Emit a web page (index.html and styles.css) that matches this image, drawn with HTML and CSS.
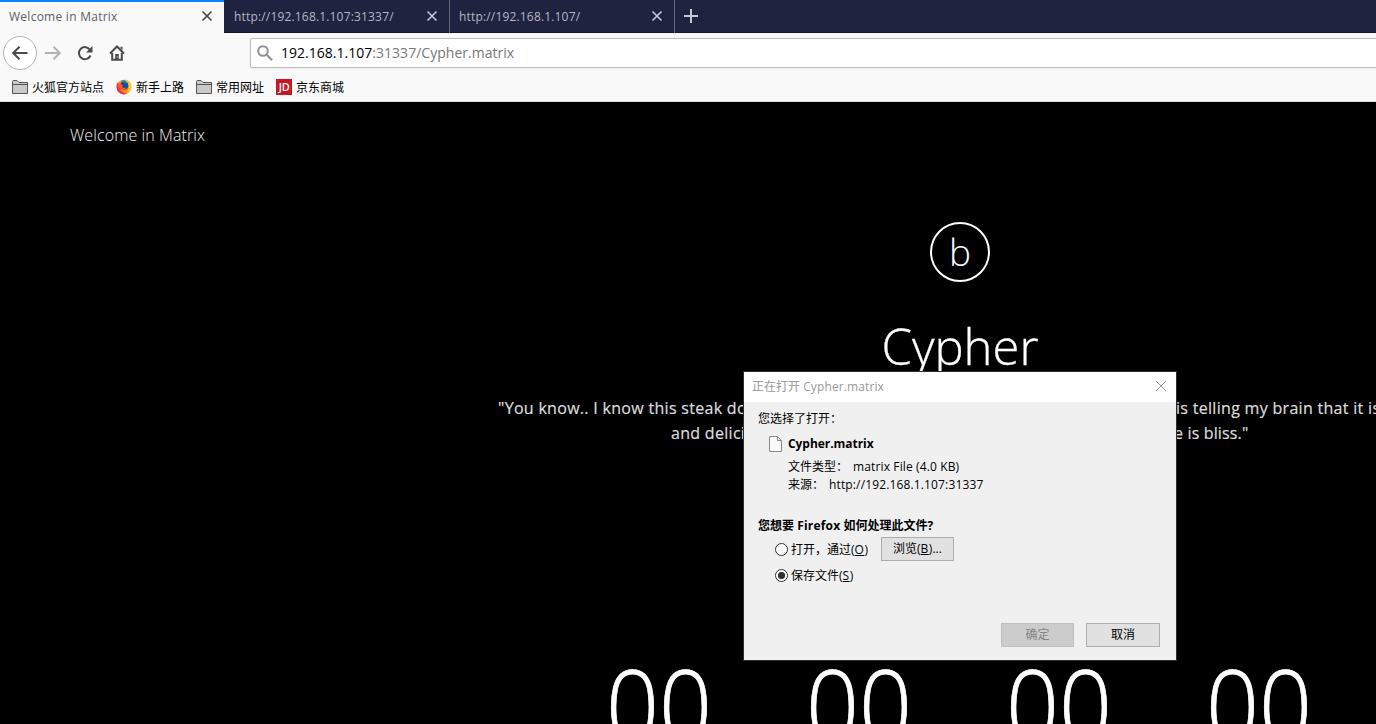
FILE: index.html
```html
<!DOCTYPE html>
<html lang="zh-CN">
<head>
<meta charset="utf-8">
<title>Welcome in Matrix</title>
<link rel="stylesheet" href="styles.css">
</head>
<body>
<div class="browser">
  <div class="tabs">
    <div class="tab active"><span class="label t1">Welcome in Matrix</span><svg class="close" viewBox="0 0 12 12"><path d="M1.5 1.5l9 9M10.5 1.5l-9 9"/></svg></div>
    <div class="tab second"><span class="label t2">http://192.168.1.107:31337/</span><svg class="close" viewBox="0 0 12 12"><path d="M1.5 1.5l9 9M10.5 1.5l-9 9"/></svg></div>
    <div class="tab third"><span class="label t3">http://192.168.1.107/</span><svg class="close" viewBox="0 0 12 12"><path d="M1.5 1.5l9 9M10.5 1.5l-9 9"/></svg></div>
    <svg class="plus" viewBox="0 0 14 14"><path d="M7 0v14M0 7h14"/></svg>
  </div>
  <div class="toolbar">
    <div class="back"><svg class="icon" viewBox="0 0 16 16"><path d="M15.500 8H1.5M7.5 1.7L1.2 8l6.3 6.3"/></svg></div>
    <svg class="icon forward" viewBox="0 0 16 16"><path d="M0 8h14.5M8.5 1.7L14.800 8l-6.300 6.300"/></svg>
    <svg class="icon reload" viewBox="0 0 16 16"><path d="M13.500 10.500A6 6 0 1 1 13 4.800"/><path class="fill" d="M15.500 1v6.500H9z"/></svg>
    <svg class="icon home" viewBox="0 0 16 16"><path d="M1 8.500L8 1.500l7 7M3.200 8v6.800h9.600V8"/><path class="fill" d="M6.200 9h3.600v6H6.200zM11.500 1.800h2v3.500l-2-2z"/><path class="knob" d="M8.300 11.500v1"/></svg>
    <div class="address"><svg class="search" viewBox="0 0 16 16"><circle cx="6" cy="6" r="4.800"/><path d="M9.700 9.700l5.500 5.500"/></svg><span class="url"><b>192.168.1.107</b>:31337/Cypher.matrix</span></div>
  </div>
  <div class="bookmarks">
    <div class="mark"><svg class="folder" viewBox="0 0 16 14"><path d="M.5 13.500V1.500q0-1 1-1h3.500l2 2h8.500v11zM.5 4.500H15.500"/></svg><span>火狐官方站点</span></div>
    <div class="mark"><svg class="fox" viewBox="0 0 16 16"><circle cx="8" cy="8" r="7.300" fill="#ff8a16"/><path d="M9 .6c4 .4 7 4 6.400 8-.5 4-3.700 6.300-7 6.400 3-1 5-4 4-8z" fill="#ffc928"/><path d="M1 4c-1 4-.5 8 3 10.300 2 1.300 5 1.500 7 .2C6 14 3 11 4 7z" fill="#f5284e"/><circle cx="8.300" cy="6.600" r="4" fill="#174f9b"/><path d="M5 2c3-2 6 0 6.500 3L9 4z" fill="#1886d9"/><path d="M1.500 3l2.500 2L7 6.200 6 7.500l1.500 1.500 2.500-.5c-1 2.500-4 3-6 1.500C2.500 9 1.500 6 1.500 3z" fill="#ff5a2a"/></svg><span>新手上路</span></div>
    <div class="mark"><svg class="folder" viewBox="0 0 16 14"><path d="M.5 13.500V1.500q0-1 1-1h3.500l2 2h8.500v11zM.5 4.500H15.500"/></svg><span>常用网址</span></div>
    <div class="mark"><i class="jd">JD</i><span>京东商城</span></div>
  </div>
  <div class="page">
    <div class="brand">Welcome in Matrix</div>
    <div class="hero">
      <div class="circle">b</div>
      <h1><span>Cypher</span></h1>
      <div class="quote">
        <p><span>"You know.. I know this steak do</span><span>is telling my brain that it is</span></p>
        <p class="second-line"><span>and delici</span><span>e is bliss."</span></p>
      </div>
      <div class="countdown"><span>00</span><span>00</span><span>00</span><span>00</span></div>
    </div>
  </div>
</div>
<div class="dialog">
  <div class="titlebar"><span>正在打开 <em>Cypher.matrix</em></span><svg viewBox="0 0 12 12"><path d="M1 1l10 10M11 1L1 11"/></svg></div>
  <div class="content">
    <p class="chosen">您选择了打开：</p>
    <div class="file"><svg viewBox="0 0 13 16"><path d="M.5.5h8l4 4v11H.5zM8.500.5v4h4"/></svg><b>Cypher.matrix</b></div>
    <dl><dt>文件类型：</dt><dd class="kind">matrix File (4.0 KB)</dd></dl>
    <dl><dt>来源：</dt><dd class="source">http://192.168.1.107:31337</dd></dl>
    <p class="question">您想要 <em>Firefox</em> 如何处理此文件?</p>
    <div class="option open"><i class="radio"></i><span>打开，通过(<u>O</u>)</span><div class="button browse">浏览(<u>B</u>)...</div></div>
    <div class="option save"><i class="radio on"></i><span>保存文件(<u>S</u>)</span></div>
    <div class="actions"><div class="button disabled">确定</div><div class="button cancel">取消</div></div>
  </div>
</div>
</body>
</html>
```
FILE: styles.css
```css
* { box-sizing: border-box; }
body { margin: 0; width: 1376px; height: 724px; overflow: hidden; position: relative; background: #000; font: 12px "Open Sans", "Noto Sans CJK SC", sans-serif; }
p, h1, dl, dd { margin: 0; }
i, em { font-style: normal; }
svg { flex: none; fill: none; stroke: currentColor; }
.browser { width: 1376px; height: 724px; overflow: hidden; display: flex; flex-direction: column; }

.tabs { flex: none; height: 33px; display: flex; align-items: center; background: #202340; border-bottom: 1px solid #14162b; color: #b4b5c3; }
.tab { width: 225px; height: 33px; flex: none; display: flex; align-items: center; justify-content: space-between; padding: 0 11px 0 10px; border-right: 1px solid #65677b; }
.tab.second { width: 226px; }
.tab.third { padding-left: 9px; }
.tab.active { width: 224px; background: #f9f9fa; border-top: 2px solid #0a84ff; border-right: 0; color: #606064; padding: 0 11px 2px 9px; }
.label { white-space: nowrap; line-height: 18px; padding-top: 2px; }
.t1 { letter-spacing: .26px; }
.t2, .t3 { letter-spacing: .17px; }
.close { width: 12px; height: 12px; stroke-width: 1.6; color: #c8c8d2; }
.active .close { color: #454548; }
.plus { width: 14px; height: 14px; margin-left: 9px; stroke-width: 2; color: #c8c8d2; }

.toolbar { flex: none; height: 40px; display: flex; align-items: center; padding-left: 3px; background: #f9f9fa; color: #4a4a4d; }
.icon { width: 16px; height: 16px; stroke-width: 2; }
.fill { fill: currentColor; stroke: none; }
.knob { stroke: #f9f9fa; stroke-width: 1; }
.back { flex: none; width: 34px; height: 34px; border: 1px solid #b4b4b5; border-radius: 50%; background: #fff; display: flex; align-items: center; justify-content: center; }
.forward { margin-left: 8px; color: #b3b3b4; }
.reload, .home { margin-left: 16px; }
.address { width: 1140px; height: 30px; margin-left: 125px; flex: none; display: flex; align-items: center; padding-left: 6px; border: 1px solid #bdbdbe; border-radius: 2px; background: #fff; box-shadow: 0 1px 3px rgba(0,0,0,.06); }
.search { width: 16px; height: 16px; color: #939394; stroke-width: 2.1; }
.url { margin-left: 8px; padding-bottom: 1px; font-size: 14px; line-height: 19px; letter-spacing: .02px; color: #777; white-space: nowrap; }
.url b { font-weight: 400; color: #000; }

.bookmarks { flex: none; height: 29px; display: flex; background: #f9f9fa; border-bottom: 1px solid #ddd; padding: 1px 0 0 12px; }
.mark { display: flex; align-items: center; height: 26px; line-height: 18px; white-space: nowrap; }
.mark span { margin-left: 4px; padding-top: 1px; }
.mark + .mark { margin-left: 12px; }
.folder { width: 16px; height: 14px; fill: #c9c9ca; color: #555; }
.fox { width: 16px; height: 16px; stroke: none; }
.jd { width: 16px; height: 16px; background: #c91623; color: #fff; font-size: 11px; font-weight: 600; line-height: 16px; text-align: center; letter-spacing: -.5px; }

.page { flex: 1; background: #000; color: #fff; width: 1920px; height: 622px; font-weight: 300; overflow: hidden; }
.brand { height: 120px; padding: 20px 0 0 70px; font-size: 16px; line-height: 26px; letter-spacing: .1px; color: #f0f0f0; }
.hero { display: flex; flex-direction: column; align-items: center; }
.circle { width: 60px; height: 60px; border: 2px solid #fff; border-radius: 50%; font-size: 37px; line-height: 56px; text-align: center; }
h1 { margin-top: 30px; font-size: 49px; font-weight: 300; line-height: 69px; }
h1 span { display: inline-block; -webkit-text-stroke: .3px #fff; }
.quote { width: 924px; margin-top: 15px; font-size: 16px; font-weight: 400; line-height: 25px; letter-spacing: .3px; color: #ddd; white-space: nowrap; -webkit-text-stroke: .2px #ddd; }
.quote p { display: grid; grid-template-columns: 246px 246px; column-gap: 432px; }
.quote .second-line { padding-left: 173px; grid-template-columns: 73px 73px; column-gap: 430px; }
.quote .second-line span + span { letter-spacing: .15px; }
.countdown { margin-top: 188px; display: grid; grid-template-columns: repeat(4, 200px); margin-right: 2px; font-size: 101px; line-height: 140px; text-align: center; -webkit-text-stroke: .8px #fff; }
.countdown span { transform: scaleX(.92); }

.dialog { position: absolute; left: 743px; top: 371px; width: 434px; height: 290px; border: 1px solid #2d2d2f; background: #f0f0f0; color: #000; }
.titlebar { height: 30px; display: flex; align-items: center; justify-content: space-between; padding: 0 9px 2px 8px; background: #fff; color: #999; }
.titlebar em { letter-spacing: .12px; }
.titlebar svg { width: 12px; height: 12px; stroke-width: 1; }
.content { padding: 8px 16px 0 14px; }
.chosen { line-height: 18px; }
.file { display: flex; align-items: center; height: 18px; margin: 7px 0 5px 11px; }
.file svg { width: 13px; height: 16px; fill: #f8f9fa; color: #888; }
.file b { margin-left: 6px; padding-bottom: 2px; letter-spacing: -.05px; }
dl { display: flex; height: 18px; line-height: 18px; margin-left: 30px; }
dd { white-space: nowrap; }
.kind { margin-left: 5px; letter-spacing: .13px; }
.source { margin-left: 5px; letter-spacing: .14px; }
.question { margin-top: 23px; line-height: 18px; font-weight: 700; }
.question em { letter-spacing: .2px; }
.option { display: flex; align-items: center; height: 26px; margin-left: 17px; white-space: nowrap; }
.open { margin-top: 1px; }
.option u { letter-spacing: .5px; }
.radio { width: 13px; height: 13px; margin-right: 3px; border: 1px solid #333; border-radius: 50%; background: #fff; }
.radio.on { background: radial-gradient(circle, #333 0 3.3px, #fff 4px); }
.option > span { padding-bottom: 1px; }
.button { height: 24px; width: 73px; display: flex; align-items: center; justify-content: center; padding-bottom: 2px; border: 1px solid #adadad; background: #e1e1e1; white-space: nowrap; }
.browse { margin-left: 13px; }
.actions { display: flex; justify-content: flex-end; gap: 12px; margin-top: 35px; }
.disabled { background: #ccc; border-color: #bfbfbf; color: #838383; }
.cancel { width: 74px; }
```
